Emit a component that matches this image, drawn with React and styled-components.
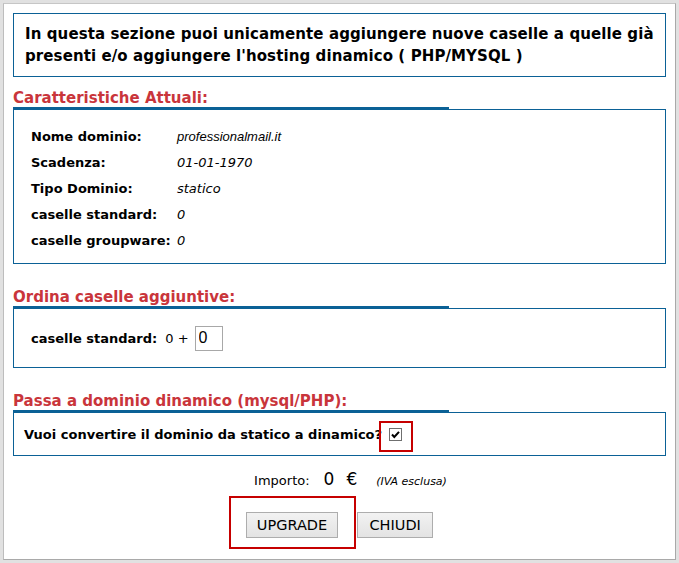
import React from "react";
import styled, { createGlobalStyle } from "styled-components";

const GlobalStyle = createGlobalStyle`
  html, body {
    margin: 0;
    padding: 0;
    background: #e1e1e1;
  }
  body {
    font-family: "DejaVu Sans", Verdana, sans-serif;
    color: #000;
  }
  * { box-sizing: border-box; }
`;

const blue = "#0b6196";
const red = "#c9353b";

const Page = styled.div`
  padding: 3px;
`;

const Panel = styled.div`
  height: 557px;
  background: #fff;
  border: 1px solid #a9a9a9;
  border-top-color: #c6c6c6;
  border-left-color: #bdbdbd;
  padding: 9px;
`;

const Intro = styled.div`
  border: 1px solid ${blue};
  padding: 9px 8px 9px 11px;
  font-size: 15px;
  font-weight: bold;
  line-height: 22px;
  letter-spacing: 0.1px;
`;

const Section = styled.section`
  margin-top: ${(p) => (p.$first ? "12px" : "24px")};
`;

const SectionTitle = styled.h3`
  margin: 0;
  width: 436px;
  color: ${red};
  font-size: 15px;
  font-weight: bold;
  line-height: 18px;
  border-bottom: 2px solid ${blue};
`;

const Box = styled.div`
  border: 1px solid ${blue};
  padding: ${(p) => p.$pad || "13px 17px"};
  height: ${(p) => p.$h || "auto"};
  display: flex;
  flex-direction: column;
  justify-content: center;
`;

const InfoGrid = styled.div`
  display: grid;
  grid-template-columns: 146px 1fr;
  grid-auto-rows: 26px;
  align-items: center;
  font-size: 13px;
`;

const Label = styled.span`
  font-weight: bold;
`;

const Value = styled.span`
  font-style: italic;
  font-family: ${(p) => (p.$alt ? '"Liberation Sans", Arial, sans-serif' : "inherit")};
  font-size: 13px;
`;

const InlineRow = styled.div`
  display: flex;
  align-items: center;
  font-size: 13px;
`;

const Plain = styled.span`
  margin: 0 6px 0 8px;
`;

const NumberInput = styled.input`
  width: 28px;
  height: 25px;
  border: 1px solid #a8a8a8;
  padding: 0 3px;
  font-family: "Liberation Sans", Arial, sans-serif;
  font-size: 16px;
  color: #000;
  outline: none;
`;

/* red outline drawn over a control, offsets relative to the control */
const Highlight = styled.span`
  position: relative;
  display: inline-flex;
  &::after {
    content: "";
    position: absolute;
    top: ${(p) => p.$t}px;
    left: ${(p) => p.$l}px;
    right: ${(p) => p.$r}px;
    bottom: ${(p) => p.$b}px;
    border: 2px solid #c60000;
    pointer-events: none;
  }
`;

const Check = styled.span`
  display: inline-flex;
  align-items: center;
  justify-content: center;
  width: 13px;
  height: 13px;
  border: 1px solid #6f6f6f;
  background: #fff;
  margin-left: 7px;
`;

const Totals = styled.div`
  margin-top: 13px;
  display: flex;
  justify-content: center;
  align-items: baseline;
  padding-left: 22px;
  font-size: 13px;
`;

const Amount = styled.span`
  font-size: 17px;
  margin: 0 12px 0 14px;
`;

const Euro = styled.span`
  font-size: 17px;
  margin-right: 19px;
`;

const Note = styled.span`
  font-size: 11px;
  font-style: italic;
`;

const Buttons = styled.div`
  margin-top: 23px;
  display: flex;
  justify-content: center;
  gap: 19px;
`;

const Button = styled.button`
  height: 26px;
  padding: 0 10px;
  border: 1px solid #adadad;
  background: linear-gradient(#f2f2f2, #e3e3e3);
  font-family: "DejaVu Sans", Verdana, sans-serif;
  font-size: 14.5px;
  color: #000;
  min-width: ${(p) => p.$w}px;
`;

export default function App() {
  return (
    <>
      <GlobalStyle />
      <Page>
        <Panel>
          <Intro>
            In questa sezione puoi unicamente aggiungere nuove caselle a quelle già
            presenti e/o aggiungere l'hosting dinamico ( PHP/MYSQL )
          </Intro>

          <Section $first>
            <SectionTitle>Caratteristiche Attuali:</SectionTitle>
            <Box $pad="13px 17px 10px">
              <InfoGrid>
                <Label>Nome dominio:</Label>
                <Value $alt>professionalmail.it</Value>
                <Label>Scadenza:</Label>
                <Value>01-01-1970</Value>
                <Label>Tipo Dominio:</Label>
                <Value>statico</Value>
                <Label>caselle standard:</Label>
                <Value>0</Value>
                <Label>caselle groupware:</Label>
                <Value>0</Value>
              </InfoGrid>
            </Box>
          </Section>

          <Section>
            <SectionTitle>Ordina caselle aggiuntive:</SectionTitle>
            <Box $pad="0 17px" $h="60px">
              <InlineRow>
                <Label>caselle standard:</Label>
                <Plain>0 +</Plain>
                <NumberInput defaultValue="0" />
              </InlineRow>
            </Box>
          </Section>

          <Section>
            <SectionTitle>Passa a dominio dinamico (mysql/PHP):</SectionTitle>
            <Box $pad="0 10px" $h="44px">
              <InlineRow>
                <Label>Vuoi convertire il dominio da statico a dinamico?</Label>
                <Highlight $t={-7} $l={-3} $r={-11} $b={-11}>
                  <Check>
                    <svg width="11" height="11" viewBox="0 0 11 11">
                      <path d="M2 5.5 L4.3 8 L9 2.8" fill="none" stroke="#000" strokeWidth="2" />
                    </svg>
                  </Check>
                </Highlight>
              </InlineRow>
            </Box>
          </Section>

          <Totals>
            Importo:
            <Amount>0</Amount>
            <Euro>€</Euro>
            <Note>(IVA esclusa)</Note>
          </Totals>

          <Buttons>
            <Highlight $t={-16} $l={-17} $r={-18} $b={-11}>
              <Button $w={89}>UPGRADE</Button>
            </Highlight>
            <Button $w={76}>CHIUDI</Button>
          </Buttons>
        </Panel>
      </Page>
    </>
  );
}
